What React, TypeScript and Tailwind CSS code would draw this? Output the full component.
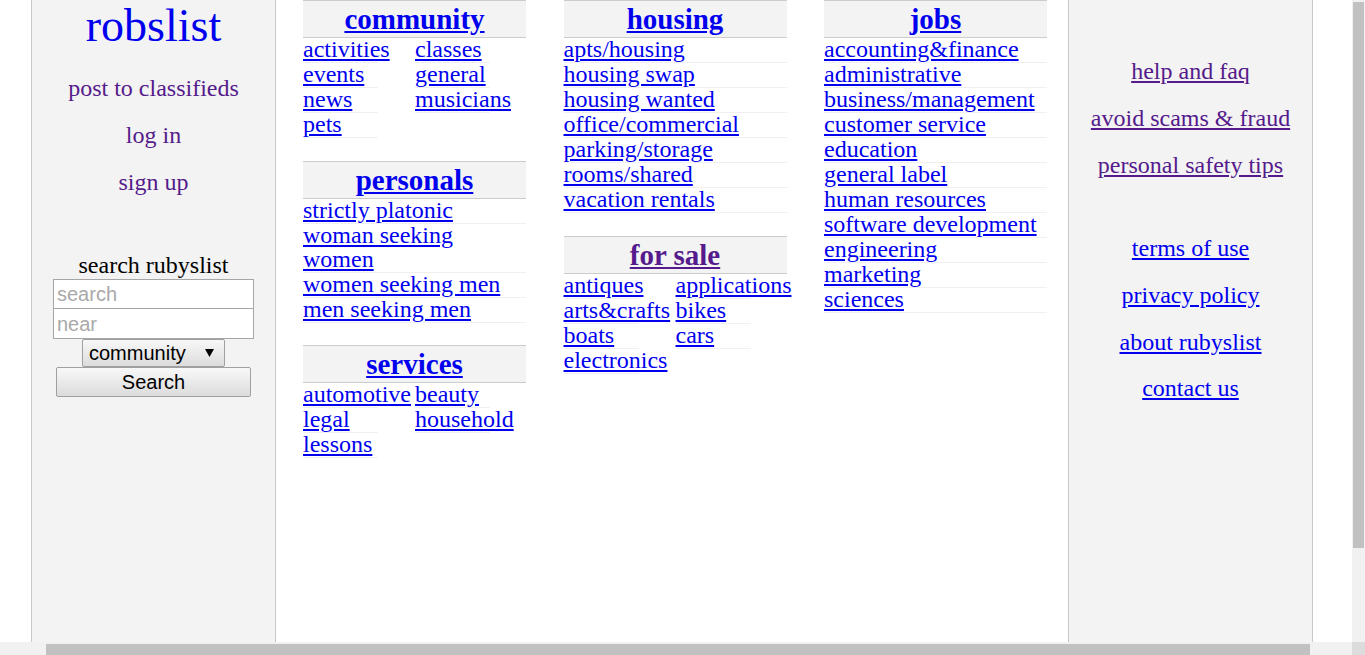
import React from 'react';

type Item = string;

interface SectionProps {
  title: string;
  items: Item[];
  twoCol?: boolean;
  visited?: boolean;
  tight?: boolean;
}

const community = ['activities', 'classes', 'events', 'general', 'news', 'musicians', 'pets'];
const personals = ['strictly platonic', 'woman seeking women', 'women seeking men', 'men seeking men'];
const services = ['automotive', 'beauty', 'legal', 'household', 'lessons'];
const housing = [
  'apts/housing',
  'housing swap',
  'housing wanted',
  'office/commercial',
  'parking/storage',
  'rooms/shared',
  'vacation rentals',
];
const forSale = ['antiques', 'applications', 'arts&crafts', 'bikes', 'boats', 'cars', 'electronics'];
const jobs = [
  'accounting&finance',
  'administrative',
  'business/management',
  'customer service',
  'education',
  'general label',
  'human resources',
  'software development',
  'engineering',
  'marketing',
  'sciences',
];

const Section: React.FC<SectionProps> = ({ title, items, twoCol = false, visited = false, tight = false }) => {
  return (
    <div className={tight ? 'mb-[22px]' : 'mb-[23px]'}>
      <div className="h-[38px] border-y border-[#cccccc] bg-[#f3f3f3] text-center">
        <a
          href="#"
          className={`text-[29px] font-bold leading-[36px] underline ${visited ? 'text-[#551a8b]' : 'text-[#0000ee]'}`}
        >
          {title}
        </a>
      </div>
      {twoCol ? (
        <div className="grid grid-cols-[112px_111px]">
          {items.map((it) => (
            <div key={it} className="w-[75px] whitespace-nowrap border-b border-[#f0f0f0] text-[24px] leading-[24px]">
              <a href="#" className="relative -top-px text-[#0000ee] underline">
                {it}
              </a>
            </div>
          ))}
        </div>
      ) : (
        <div>
          {items.map((it) => (
            <div key={it} className="border-b border-[#f0f0f0] text-[24px] leading-[24px]">
              <a href="#" className="relative -top-px text-[#0000ee] underline">
                {it}
              </a>
            </div>
          ))}
        </div>
      )}
    </div>
  );
};

const LeftSidebar = () => (
  <aside className="flex w-[245px] shrink-0 flex-col items-center border-x border-[#c8c8c8] bg-[#f3f3f3]">
    <a href="#" className="text-[46px] leading-[51px] text-[#0000ee]">
      robslist
    </a>
    <a href="#" className="mt-[25px] text-[24px] leading-[24px] text-[#551a8b]">
      post to classifieds
    </a>
    <a href="#" className="mt-[23px] text-[24px] leading-[24px] text-[#551a8b]">
      log in
    </a>
    <a href="#" className="mt-[23px] text-[24px] leading-[24px] text-[#551a8b]">
      sign up
    </a>
    <div className="mt-[59px] text-[24px] leading-[24px] text-black">search rubyslist</div>
    <form className="mt-[2px] flex flex-col items-center font-['Liberation_Sans',Arial,sans-serif]">
      <input
        placeholder="search"
        className="h-[30px] w-[201px] border border-[#a6a6a6] bg-white px-[3px] text-[20px] text-black placeholder:text-[#a9a9a9]"
      />
      <input
        placeholder="near"
        className="h-[30px] w-[201px] border border-[#a6a6a6] border-t-0 bg-white px-[3px] text-[20px] text-black placeholder:text-[#a9a9a9]"
      />
      <div className="relative">
        <select className="h-[28px] w-[143px] appearance-none rounded-[2px] border border-[#a0a0a0] bg-linear-to-b from-[#f8f8f8] to-[#dcdcdc] pl-[6px] text-[20px] leading-[24px] text-black">
          <option>community</option>
          <option>personals</option>
          <option>services</option>
          <option>housing</option>
          <option>for sale</option>
          <option>jobs</option>
        </select>
        <svg className="pointer-events-none absolute right-[11px] top-[10px]" width="9" height="8" viewBox="0 0 9 8">
          <polygon points="0,0 9,0 4.5,8" fill="#000" />
        </svg>
      </div>
      <button
        type="button"
        className="h-[30px] w-[195px] rounded-[2px] border border-[#a0a0a0] bg-linear-to-b from-[#f8f8f8] to-[#dcdcdc] text-[20px] leading-[24px] text-black"
      >
        Search
      </button>
    </form>
  </aside>
);

const RightSidebar = () => (
  <aside className="flex w-[245px] shrink-0 flex-col items-center border-x border-[#c8c8c8] bg-[#f3f3f3] pt-[59px] text-[24px] leading-[24px]">
    <a href="#" className="text-[#551a8b] underline">help and faq</a>
    <a href="#" className="mt-[23px] text-[#551a8b] underline">avoid scams &amp; fraud</a>
    <a href="#" className="mt-[23px] text-[#551a8b] underline">personal safety tips</a>
    <a href="#" className="mt-[59px] text-[#0000ee] underline">terms of use</a>
    <a href="#" className="mt-[23px] text-[#0000ee] underline">privacy policy</a>
    <a href="#" className="mt-[23px] text-[#0000ee] underline">about rubyslist</a>
    <a href="#" className="mt-[22px] text-[#0000ee] underline">contact us</a>
  </aside>
);

export default function App() {
  return (
    <div className="flex h-[655px] w-[1365px] flex-col overflow-hidden bg-white font-['Liberation_Serif','Times_New_Roman',serif]">
      <div className="flex h-[642px]">
        <div className="flex w-[1352px]">
          <div className="w-[31px] shrink-0" />
          <LeftSidebar />
          <main className="flex w-[792px] shrink-0 gap-[37.5px] pl-[27px]">
            <div className="w-[223px] shrink-0">
              <Section title="community" items={community} twoCol />
              <Section title="personals" items={personals} tight />
              <Section title="services" items={services} twoCol />
            </div>
            <div className="w-[223px] shrink-0">
              <Section title="housing" items={housing} />
              <Section title="for sale" items={forSale} twoCol visited />
            </div>
            <div className="w-[223px] shrink-0">
              <Section title="jobs" items={jobs} />
            </div>
          </main>
          <RightSidebar />
          <div className="flex-1" />
        </div>
        {/* vertical scrollbar */}
        <div className="w-[13px] bg-[#f1f1f1] px-[1px] pt-[2px]">
          <div className="h-[546px] bg-[#c1c1c1]" />
        </div>
      </div>
      {/* horizontal scrollbar */}
      <div className="flex h-[13px]">
        <div className="w-[1352px] bg-[#f1f1f1] pl-[46px] pt-[2px]">
          <div className="h-full w-[1264px] bg-[#c1c1c1]" />
        </div>
        <div className="w-[13px] bg-[#dcdcdc]" />
      </div>
    </div>
  );
}
